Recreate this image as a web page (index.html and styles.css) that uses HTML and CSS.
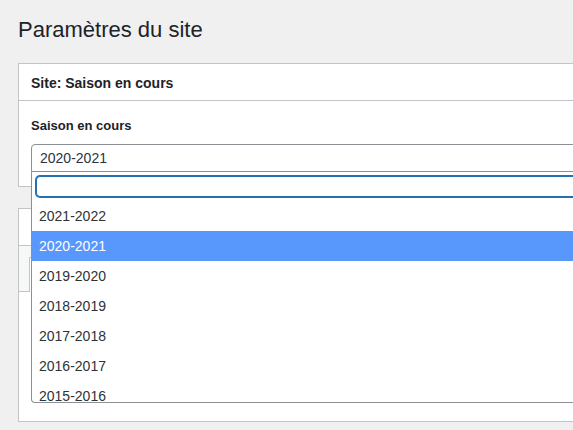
FILE: index.html
```html
<!DOCTYPE html>
<html lang="fr">
<head>
<meta charset="utf-8">
<title>Paramètres du site</title>
<link rel="stylesheet" href="styles.css">
</head>
<body>
<div class="wrap">
  <h1 class="page-title">Paramètres du site</h1>

  <div class="card">
    <div class="card-header">Site: Saison en cours</div>
    <div class="card-body">
      <label class="field-label">Saison en cours</label>
      <div class="select">
        <div class="select-box">2020-2021</div>
        <div class="dropdown">
          <div class="search"><div class="search-input"></div></div>
          <ul class="options">
            <li class="option">2021-2022</li>
            <li class="option selected">2020-2021</li>
            <li class="option">2019-2020</li>
            <li class="option">2018-2019</li>
            <li class="option">2017-2018</li>
            <li class="option">2016-2017</li>
            <li class="option">2015-2016</li>
          </ul>
        </div>
      </div>
    </div>
  </div>

  <div class="card card-second">
    <div class="card-header empty"></div>
    <div class="tabs"><span class="tab active"></span></div>
    <div class="tab-panel"></div>
  </div>
</div>
</body>
</html>
```

FILE: styles.css
```css
html, body {
  margin: 0;
  padding: 0;
  overflow: hidden;
  background: #f0f0f1;
  font-family: "Liberation Sans", Arial, sans-serif;
  color: #1d2327;
}

.wrap {
  padding-left: 18px;
  width: 820px;
}

.page-title {
  margin: 0;
  padding-top: 17px;
  font-size: 22px;
  line-height: 26px;
  font-weight: 400;
  color: #1d2327;
}

.card {
  margin-top: 20px;
  background: #fff;
  border: 1px solid #c3c4c7;
}

.card-second {
  margin-top: 21px;
}

.card-header {
  padding: 9px 12px 7px;
  font-size: 14px;
  line-height: 20px;
  font-weight: 700;
  color: #1d2327;
  border-bottom: 1px solid #c3c4c7;
}

.card-header.empty {
  height: 20px;
}

.card-body {
  padding: 15px 12px 14px;
}

.field-label {
  display: block;
  font-size: 13px;
  line-height: 20px;
  font-weight: 700;
  color: #1d2327;
  margin-bottom: 8px;
}

.select {
  position: relative;
  width: 760px;
}

.select-box {
  height: 26px;
  line-height: 26px;
  padding-left: 8px;
  border: 1px solid #8c8f94;
  border-radius: 4px 4px 0 0;
  font-size: 14px;
  color: #2c3338;
}

.dropdown {
  position: absolute;
  left: 0;
  right: 0;
  top: 100%;
  z-index: 10;
  background: #fff;
  border: 1px solid #8c8f94;
  border-top: none;
  border-radius: 0 0 4px 4px;
}

.search {
  padding: 4px;
}

.search-input {
  height: 19px;
  border: 1px solid #2271b1;
  box-shadow: 0 0 0 1px #2271b1;
  border-radius: 4px;
  background: #fff;
}

.options {
  list-style: none;
  margin: 0;
  padding: 0;
  max-height: 201px;
  overflow: hidden;
}

.option {
  height: 30px;
  line-height: 30px;
  padding-left: 7px;
  font-size: 14px;
  color: #2c3338;
}

.option.selected {
  background: #5897fb;
  color: #fff;
}

.tabs {
  display: flex;
  background: #f6f7f7;
  padding: 11px 0 0 10px;
  border-bottom: 1px solid #c3c4c7;
  height: 34px;
}

.tab {
  display: block;
  width: 120px;
  height: 34px;
  background: #fff;
  border: 1px solid #c3c4c7;
  border-bottom: none;
  margin-bottom: -1px;
}

.tab-panel {
  height: 129px;
}
```
